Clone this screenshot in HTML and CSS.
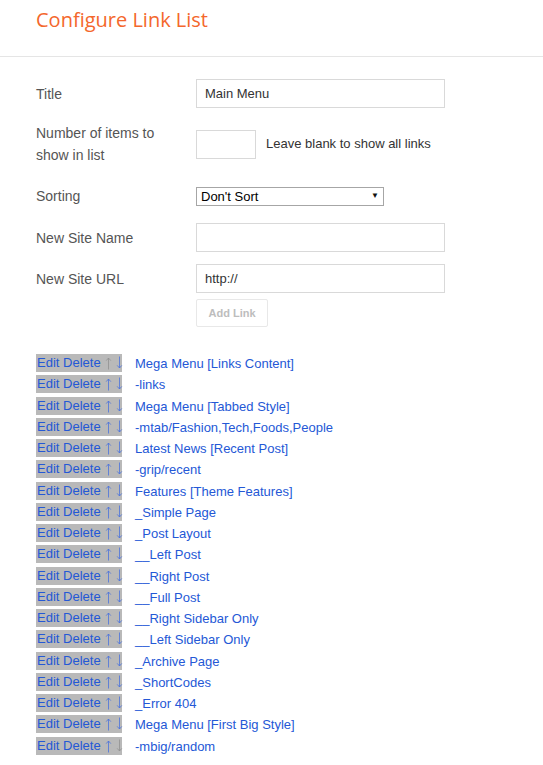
FILE: index.html
```html
<!DOCTYPE html>
<html>
<head>
<meta charset="utf-8">
<link rel="stylesheet" href="styles.css">
</head>
<body>
<header class="head">
  <h1 class="title">Configure Link List</h1>
</header>
<form class="form">
  <div class="row r1">
    <label class="lbl">Title</label>
    <input class="txt" type="text" value="Main Menu">
  </div>
  <div class="row r2">
    <label class="lbl">Number of items to show in list</label>
    <input class="txt num" type="text" value="">
    <span class="hint">Leave blank to show all links</span>
  </div>
  <div class="row r3">
    <label class="lbl">Sorting</label>
    <div class="selwrap">
      <select class="sel"><option>Don't Sort</option></select>
    </div>
  </div>
  <div class="row r4">
    <label class="lbl">New Site Name</label>
    <input class="txt" type="text" value="">
  </div>
  <div class="row r5">
    <label class="lbl">New Site URL</label>
    <input class="txt" type="text" value="http://">
  </div>
  <div class="row r6">
    <span class="lbl"></span>
    <button class="btn" type="button" disabled>Add Link</button>
  </div>
</form>
<ul class="links">
  <li><span class="ctl"><a>Edit</a> <a>Delete</a><a class="arr off"><svg viewBox="0 0 7 14" class="ic"><path d="M3.5 2V13.5M1.2 4.6L3.5 2L5.8 4.6"/></svg></a><a class="arr"><svg viewBox="0 0 7 14" class="ic"><path d="M3.5 0.5V12M1.2 9.4L3.5 12L5.8 9.4"/></svg></a></span><a>Mega Menu [Links Content]</a></li>
  <li><span class="ctl"><a>Edit</a> <a>Delete</a><a class="arr"><svg viewBox="0 0 7 14" class="ic"><path d="M3.5 2V13.5M1.2 4.6L3.5 2L5.8 4.6"/></svg></a><a class="arr"><svg viewBox="0 0 7 14" class="ic"><path d="M3.5 0.5V12M1.2 9.4L3.5 12L5.8 9.4"/></svg></a></span><a>-links</a></li>
  <li><span class="ctl"><a>Edit</a> <a>Delete</a><a class="arr"><svg viewBox="0 0 7 14" class="ic"><path d="M3.5 2V13.5M1.2 4.6L3.5 2L5.8 4.6"/></svg></a><a class="arr"><svg viewBox="0 0 7 14" class="ic"><path d="M3.5 0.5V12M1.2 9.4L3.5 12L5.8 9.4"/></svg></a></span><a>Mega Menu [Tabbed Style]</a></li>
  <li><span class="ctl"><a>Edit</a> <a>Delete</a><a class="arr"><svg viewBox="0 0 7 14" class="ic"><path d="M3.5 2V13.5M1.2 4.6L3.5 2L5.8 4.6"/></svg></a><a class="arr"><svg viewBox="0 0 7 14" class="ic"><path d="M3.5 0.5V12M1.2 9.4L3.5 12L5.8 9.4"/></svg></a></span><a>-mtab/Fashion,Tech,Foods,People</a></li>
  <li><span class="ctl"><a>Edit</a> <a>Delete</a><a class="arr"><svg viewBox="0 0 7 14" class="ic"><path d="M3.5 2V13.5M1.2 4.6L3.5 2L5.8 4.6"/></svg></a><a class="arr"><svg viewBox="0 0 7 14" class="ic"><path d="M3.5 0.5V12M1.2 9.4L3.5 12L5.8 9.4"/></svg></a></span><a>Latest News [Recent Post]</a></li>
  <li><span class="ctl"><a>Edit</a> <a>Delete</a><a class="arr"><svg viewBox="0 0 7 14" class="ic"><path d="M3.5 2V13.5M1.2 4.6L3.5 2L5.8 4.6"/></svg></a><a class="arr"><svg viewBox="0 0 7 14" class="ic"><path d="M3.5 0.5V12M1.2 9.4L3.5 12L5.8 9.4"/></svg></a></span><a>-grip/recent</a></li>
  <li><span class="ctl"><a>Edit</a> <a>Delete</a><a class="arr"><svg viewBox="0 0 7 14" class="ic"><path d="M3.5 2V13.5M1.2 4.6L3.5 2L5.8 4.6"/></svg></a><a class="arr"><svg viewBox="0 0 7 14" class="ic"><path d="M3.5 0.5V12M1.2 9.4L3.5 12L5.8 9.4"/></svg></a></span><a>Features [Theme Features]</a></li>
  <li><span class="ctl"><a>Edit</a> <a>Delete</a><a class="arr"><svg viewBox="0 0 7 14" class="ic"><path d="M3.5 2V13.5M1.2 4.6L3.5 2L5.8 4.6"/></svg></a><a class="arr"><svg viewBox="0 0 7 14" class="ic"><path d="M3.5 0.5V12M1.2 9.4L3.5 12L5.8 9.4"/></svg></a></span><a>_Simple Page</a></li>
  <li><span class="ctl"><a>Edit</a> <a>Delete</a><a class="arr"><svg viewBox="0 0 7 14" class="ic"><path d="M3.5 2V13.5M1.2 4.6L3.5 2L5.8 4.6"/></svg></a><a class="arr"><svg viewBox="0 0 7 14" class="ic"><path d="M3.5 0.5V12M1.2 9.4L3.5 12L5.8 9.4"/></svg></a></span><a>_Post Layout</a></li>
  <li><span class="ctl"><a>Edit</a> <a>Delete</a><a class="arr"><svg viewBox="0 0 7 14" class="ic"><path d="M3.5 2V13.5M1.2 4.6L3.5 2L5.8 4.6"/></svg></a><a class="arr"><svg viewBox="0 0 7 14" class="ic"><path d="M3.5 0.5V12M1.2 9.4L3.5 12L5.8 9.4"/></svg></a></span><a>__Left Post</a></li>
  <li><span class="ctl"><a>Edit</a> <a>Delete</a><a class="arr"><svg viewBox="0 0 7 14" class="ic"><path d="M3.5 2V13.5M1.2 4.6L3.5 2L5.8 4.6"/></svg></a><a class="arr"><svg viewBox="0 0 7 14" class="ic"><path d="M3.5 0.5V12M1.2 9.4L3.5 12L5.8 9.4"/></svg></a></span><a>__Right Post</a></li>
  <li><span class="ctl"><a>Edit</a> <a>Delete</a><a class="arr"><svg viewBox="0 0 7 14" class="ic"><path d="M3.5 2V13.5M1.2 4.6L3.5 2L5.8 4.6"/></svg></a><a class="arr"><svg viewBox="0 0 7 14" class="ic"><path d="M3.5 0.5V12M1.2 9.4L3.5 12L5.8 9.4"/></svg></a></span><a>__Full Post</a></li>
  <li><span class="ctl"><a>Edit</a> <a>Delete</a><a class="arr"><svg viewBox="0 0 7 14" class="ic"><path d="M3.5 2V13.5M1.2 4.6L3.5 2L5.8 4.6"/></svg></a><a class="arr"><svg viewBox="0 0 7 14" class="ic"><path d="M3.5 0.5V12M1.2 9.4L3.5 12L5.8 9.4"/></svg></a></span><a>__Right Sidebar Only</a></li>
  <li><span class="ctl"><a>Edit</a> <a>Delete</a><a class="arr"><svg viewBox="0 0 7 14" class="ic"><path d="M3.5 2V13.5M1.2 4.6L3.5 2L5.8 4.6"/></svg></a><a class="arr"><svg viewBox="0 0 7 14" class="ic"><path d="M3.5 0.5V12M1.2 9.4L3.5 12L5.8 9.4"/></svg></a></span><a>__Left Sidebar Only</a></li>
  <li><span class="ctl"><a>Edit</a> <a>Delete</a><a class="arr"><svg viewBox="0 0 7 14" class="ic"><path d="M3.5 2V13.5M1.2 4.6L3.5 2L5.8 4.6"/></svg></a><a class="arr"><svg viewBox="0 0 7 14" class="ic"><path d="M3.5 0.5V12M1.2 9.4L3.5 12L5.8 9.4"/></svg></a></span><a>_Archive Page</a></li>
  <li><span class="ctl"><a>Edit</a> <a>Delete</a><a class="arr"><svg viewBox="0 0 7 14" class="ic"><path d="M3.5 2V13.5M1.2 4.6L3.5 2L5.8 4.6"/></svg></a><a class="arr"><svg viewBox="0 0 7 14" class="ic"><path d="M3.5 0.5V12M1.2 9.4L3.5 12L5.8 9.4"/></svg></a></span><a>_ShortCodes</a></li>
  <li><span class="ctl"><a>Edit</a> <a>Delete</a><a class="arr"><svg viewBox="0 0 7 14" class="ic"><path d="M3.5 2V13.5M1.2 4.6L3.5 2L5.8 4.6"/></svg></a><a class="arr"><svg viewBox="0 0 7 14" class="ic"><path d="M3.5 0.5V12M1.2 9.4L3.5 12L5.8 9.4"/></svg></a></span><a>_Error 404</a></li>
  <li><span class="ctl"><a>Edit</a> <a>Delete</a><a class="arr"><svg viewBox="0 0 7 14" class="ic"><path d="M3.5 2V13.5M1.2 4.6L3.5 2L5.8 4.6"/></svg></a><a class="arr"><svg viewBox="0 0 7 14" class="ic"><path d="M3.5 0.5V12M1.2 9.4L3.5 12L5.8 9.4"/></svg></a></span><a>Mega Menu [First Big Style]</a></li>
  <li><span class="ctl"><a>Edit</a> <a>Delete</a><a class="arr"><svg viewBox="0 0 7 14" class="ic"><path d="M3.5 2V13.5M1.2 4.6L3.5 2L5.8 4.6"/></svg></a><a class="arr off"><svg viewBox="0 0 7 14" class="ic"><path d="M3.5 0.5V12M1.2 9.4L3.5 12L5.8 9.4"/></svg></a></span><a>-mbig/random</a></li>
</ul>
</body>
</html>
```

FILE: styles.css
```css
html, body {
  margin: 0;
  padding: 0;
  background: #fff;
}
body {
  font-family: "Liberation Sans", Arial, sans-serif;
  color: #555;
}
.head {
  height: 56px;
  border-bottom: 1px solid #e5e5e5;
  padding-left: 36px;
  box-sizing: content-box;
}
.title {
  margin: 0;
  padding-top: 6px;
  font-family: "Open Sans", "Noto Sans", sans-serif;
  font-weight: 400;
  font-size: 20px;
  line-height: 28px;
  color: #f4672c;
}
.form {
  padding: 22px 0 0 36px;
}
.row {
  display: flex;
  align-items: center;
}
.lbl {
  flex: 0 0 140px;
  margin-right: 20px;
  font-size: 14px;
  line-height: 22px;
  color: #555;
}
.r1 .lbl { line-height: 20px; }
.r2 { margin-top: 14px; }
.r3 { margin-top: 19px; }
.r4 { margin-top: 16px; }
.r5 { margin-top: 12px; }
.r6 { margin-top: 6px; }
.txt {
  box-sizing: border-box;
  width: 249px;
  height: 29px;
  margin: 0;
  border: 1px solid #d9d9d9;
  border-radius: 0;
  padding: 0 8px;
  font-family: "Liberation Sans", Arial, sans-serif;
  font-size: 13px;
  color: #333;
  outline: none;
}
.num {
  width: 60px;
}
.hint {
  margin-left: 10px;
  font-size: 13px;
  color: #333;
  position: relative;
  top: -1px;
}
.selwrap {
  position: relative;
  width: 188px;
  height: 19px;
}
.sel {
  -webkit-appearance: none;
  appearance: none;
  box-sizing: border-box;
  width: 188px;
  height: 19px;
  margin: 0;
  padding: 0 0 0 4px;
  border: 1px solid #a6a6a6;
  border-radius: 0;
  background: #fff;
  font-family: "Liberation Sans", Arial, sans-serif;
  font-size: 13px;
  line-height: 17px;
  color: #000;
}
.selwrap::after {
  content: "\25BC";
  position: absolute;
  right: 5px;
  top: 4px;
  font-size: 8px;
  line-height: 10px;
  color: #111;
  pointer-events: none;
}
.btn {
  box-sizing: border-box;
  width: 72px;
  height: 28px;
  margin: 0;
  padding: 0;
  border: 1px solid #e8e8e8;
  border-radius: 2px;
  background: #fff;
  font-family: "Liberation Sans", Arial, sans-serif;
  font-size: 11px;
  font-weight: 700;
  color: #bdbdbd;
}
.links {
  list-style: none;
  margin: 0;
  padding: 26px 0 0 36px;
  font-size: 13px;
  line-height: 21.26px;
}
.links li {
  height: 21.26px;
  white-space: nowrap;
}
.links a {
  color: #2458d6;
  text-decoration: none;
}
.ctl {
  display: inline-block;
  box-sizing: border-box;
  width: 86px;
  height: 18px;
  line-height: 18px;
  padding-left: 1px;
  margin-right: 13px;
  background: #b9b9b9;
  vertical-align: top;
  margin-top: 1px;
}
.arr {
  display: inline-block;
  margin-left: 4px;
  vertical-align: top;
  height: 18px;
}
.links .arr {
  color: #4a72dc;
}
.ic {
  display: block;
  width: 7px;
  height: 14px;
  margin-top: 2px;
  fill: none;
  stroke: currentColor;
  stroke-width: 0.8;
}
.links .off {
  color: #909090;
}
```
